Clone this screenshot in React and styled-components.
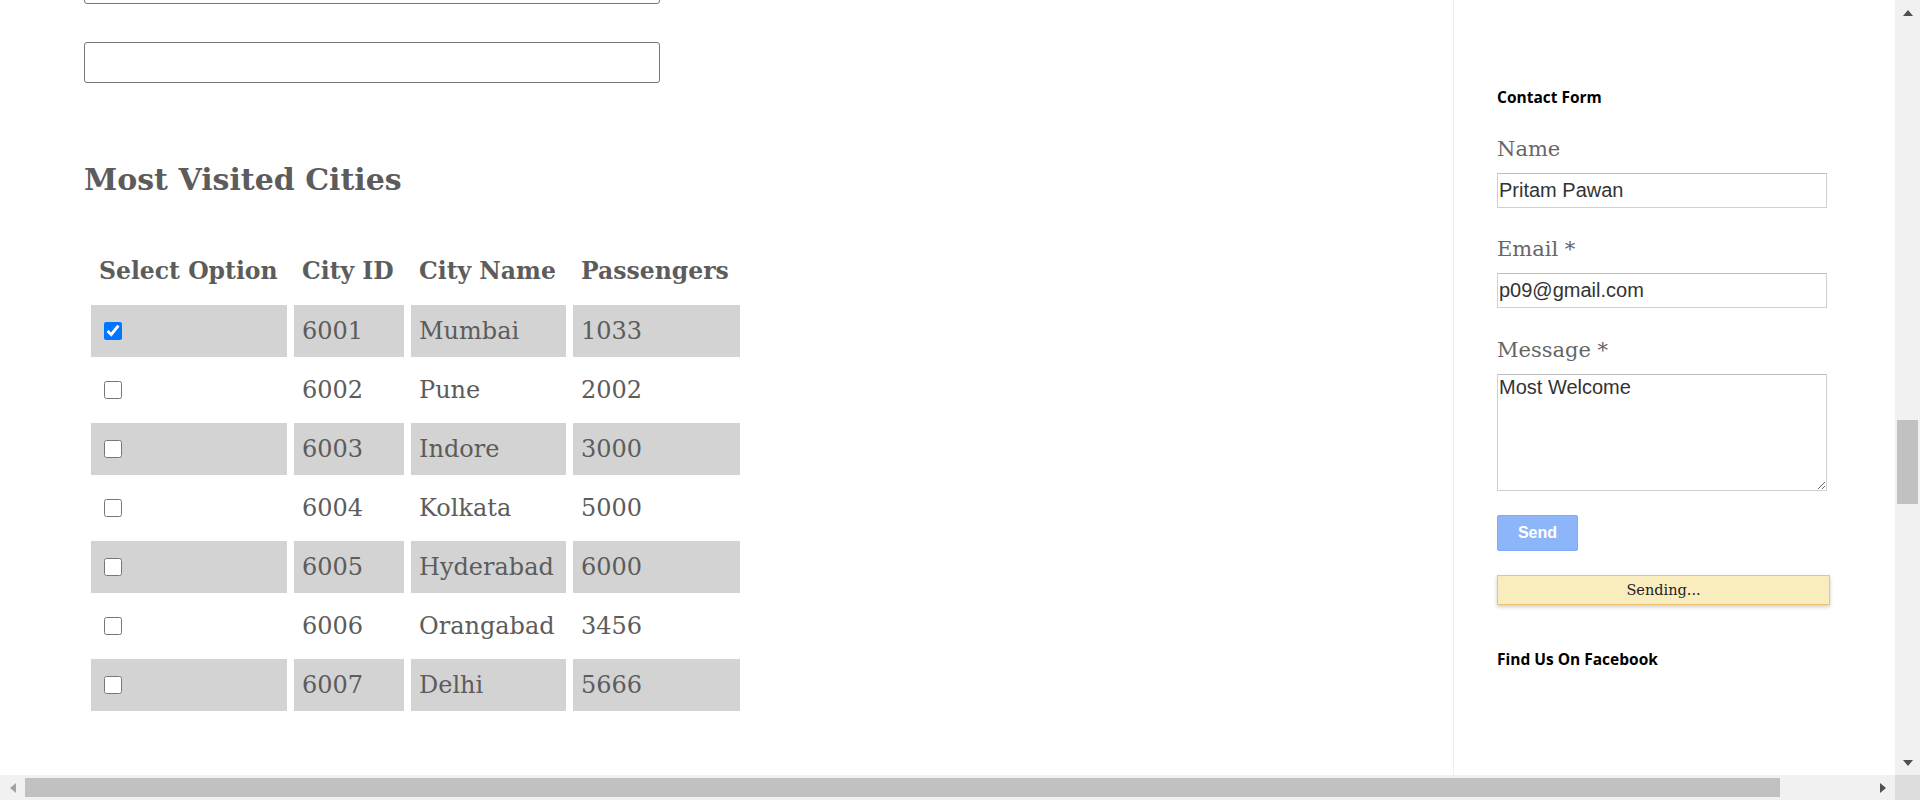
import React from 'react';
import styled, { createGlobalStyle } from 'styled-components';

const cities = [
  { id: 6001, name: 'Mumbai', passengers: 1033, checked: true },
  { id: 6002, name: 'Pune', passengers: 2002 },
  { id: 6003, name: 'Indore', passengers: 3000 },
  { id: 6004, name: 'Kolkata', passengers: 5000 },
  { id: 6005, name: 'Hyderabad', passengers: 6000 },
  { id: 6006, name: 'Orangabad', passengers: 3456 },
  { id: 6007, name: 'Delhi', passengers: 5666 }
];

const columns = [
  { title: 'Select Option', width: 180 },
  { title: 'City ID', width: 94 },
  { title: 'City Name', width: 139 },
  { title: 'Passengers', width: 151 }
];

const GlobalStyle = createGlobalStyle`
  html, body {
    margin: 0;
    padding: 0;
    background: #fff;
    overflow: hidden;
  }
  body {
    font-family: 'DejaVu Serif', Georgia, serif;
    color: #5c5c5c;
  }
`;

const App = () => {
  return (
    <>
      <GlobalStyle />
      <Viewport>
        <Page>
          <Content>
            <Field type='text' overlap />
            <Field type='text' />
            <Heading>Most Visited Cities</Heading>
            <Table>
              <colgroup>
                {columns.map(col => (
                  <Col key={col.title} w={col.width} />
                ))}
              </colgroup>
              <thead>
                <tr>
                  {columns.map(col => (
                    <Th key={col.title}>{col.title}</Th>
                  ))}
                </tr>
              </thead>
              <tbody>
                {cities.map((city, i) => (
                  <tr key={city.id}>
                    <Td shaded={i % 2 === 0}>
                      <Check type='checkbox' defaultChecked={!!city.checked} />
                    </Td>
                    <Td shaded={i % 2 === 0}>{city.id}</Td>
                    <Td shaded={i % 2 === 0}>{city.name}</Td>
                    <Td shaded={i % 2 === 0}>{city.passengers}</Td>
                  </tr>
                ))}
              </tbody>
            </Table>
          </Content>

          <Sidebar>
            <WidgetTitle>Contact Form</WidgetTitle>
            <Label>Name</Label>
            <FormInput type='text' defaultValue='Pritam Pawan' />
            <Label>Email *</Label>
            <FormInput type='text' defaultValue='p09@gmail.com' />
            <Label extra={1}>Message *</Label>
            <FormArea defaultValue='Most Welcome' />
            <SendButton type='button'>Send</SendButton>
            <Notice>Sending...</Notice>
            <WidgetTitle gap={44}>Find Us On Facebook</WidgetTitle>
          </Sidebar>
        </Page>

        <VScroll>
          <Arrow dir='up' />
          <VTrack>
            <VThumb />
          </VTrack>
          <Arrow dir='down' />
        </VScroll>

        <HScroll>
          <Arrow dir='left' faded />
          <HTrack>
            <HThumb />
          </HTrack>
          <Arrow dir='right' />
        </HScroll>

        <Corner />
      </Viewport>
    </>
  );
};

export default App;

const Viewport = styled.div`
  display: grid;
  grid-template-columns: 1fr 25px;
  grid-template-rows: 775px 25px;
  width: 1920px;
  height: 800px;
  overflow: hidden;
`;

const Page = styled.div`
  display: flex;
  overflow: hidden;
  background: #fff;
`;

const Content = styled.main`
  flex: 1;
  padding-left: 84px;
`;

const Field = styled.input`
  display: block;
  box-sizing: border-box;
  width: 576px;
  height: 41px;
  margin: ${({ overlap }) => (overlap ? '-37px 0 38px' : '0')};
  border: 1px solid #767676;
  border-radius: 3px;
  background: #fff;
  outline: none;
`;

const Heading = styled.h2`
  margin: 77px 0 39px;
  font-size: 30px;
  line-height: 40px;
  font-weight: 700;
  color: #5c5c5c;
`;

const Table = styled.table`
  width: 663px;
  border-spacing: 7px;
  table-layout: fixed;
`;

const Col = styled.col`
  width: ${({ w }) => w + 16}px;
`;

const Th = styled.th`
  height: 50px;
  padding: 0 8px 2px;
  text-align: left;
  font-size: 23.5px;
  font-weight: 700;
  color: #5c5c5c;
  white-space: nowrap;
  overflow: visible;
`;

const Td = styled.td`
  height: 52px;
  padding: 0 8px;
  font-size: 24px;
  color: #5c5c5c;
  background: ${({ shaded }) => (shaded ? '#d3d3d3' : 'transparent')};
  white-space: nowrap;
`;

const Check = styled.input`
  width: 18px;
  height: 18px;
  margin: 0 0 4px 5px;
  vertical-align: middle;
  accent-color: #0075ff;
`;

const Sidebar = styled.aside`
  box-sizing: border-box;
  width: 442px;
  flex-shrink: 0;
  border-left: 1px solid #eeeeee;
  padding: 87px 0 0 43px;
`;

const WidgetTitle = styled.h3`
  margin: ${({ gap }) => gap || 0}px 0 0;
  font-family: 'Open Sans', 'DejaVu Sans', sans-serif;
  font-size: 15.5px;
  line-height: 21px;
  font-weight: 700;
  color: #000;
`;

const Label = styled.div`
  margin: ${({ extra }) => 27 + (extra || 0)}px 0 10px;
  font-size: 21px;
  line-height: 28px;
  color: #666;
`;

const FormInput = styled.input`
  display: block;
  box-sizing: border-box;
  width: 330px;
  height: 35px;
  padding: 0 1px;
  border: 1px solid #d0d0d0;
  border-top-color: #bdbdbd;
  border-radius: 0;
  font-family: 'Liberation Sans', Arial, sans-serif;
  font-size: 20px;
  color: #333;
  outline: none;
`;

const FormArea = styled.textarea`
  display: block;
  box-sizing: border-box;
  width: 330px;
  height: 117px;
  padding: 1px;
  border: 1px solid #d0d0d0;
  border-top-color: #bdbdbd;
  font-family: 'Liberation Sans', Arial, sans-serif;
  font-size: 20px;
  line-height: 23px;
  color: #333;
  outline: none;
`;

const SendButton = styled.button`
  display: block;
  box-sizing: border-box;
  width: 81px;
  height: 36px;
  margin-top: 24px;
  border: 1px solid #7eaaf7;
  border-radius: 2px;
  background: #8db6fa;
  color: #fff;
  font-family: 'Liberation Sans', Arial, sans-serif;
  font-size: 16px;
  font-weight: 700;
`;

const Notice = styled.div`
  box-sizing: border-box;
  width: 333px;
  height: 30px;
  margin-top: 24px;
  border: 1px solid #f0c36d;
  background: #f9edbe;
  box-shadow: 0 2px 4px rgba(0, 0, 0, 0.2);
  text-align: center;
  font-size: 14.5px;
  line-height: 28px;
  color: #222;
`;

const VScroll = styled.div`
  display: flex;
  flex-direction: column;
  background: #f1f1f1;
`;

const HScroll = styled.div`
  display: flex;
  background: #f1f1f1;
`;

const VTrack = styled.div`
  flex: 1;
  padding-top: 395px;
`;

const VThumb = styled.div`
  width: 21px;
  height: 84px;
  margin-left: 2px;
  background: #c1c1c1;
`;

const HTrack = styled.div`
  flex: 1;
  display: flex;
  align-items: center;
`;

const HThumb = styled.div`
  width: 1755px;
  height: 19px;
  background: #c1c1c1;
`;

const Corner = styled.div`
  background: #dcdcdc;
`;

const arrowShapes = {
  up: 'border-left: 5px solid transparent; border-right: 5px solid transparent; border-bottom: 6px solid;',
  down: 'border-left: 5px solid transparent; border-right: 5px solid transparent; border-top: 6px solid;',
  left: 'border-top: 5px solid transparent; border-bottom: 5px solid transparent; border-right: 6px solid;',
  right: 'border-top: 5px solid transparent; border-bottom: 5px solid transparent; border-left: 6px solid;'
};

const Arrow = styled.div`
  flex-shrink: 0;
  width: 25px;
  height: 25px;
  display: flex;
  align-items: center;
  justify-content: center;
  color: ${({ faded }) => (faded ? '#a3a3a3' : '#505050')};

  &::before {
    content: '';
    width: 0;
    height: 0;
    ${({ dir }) => arrowShapes[dir]}
  }
`;
